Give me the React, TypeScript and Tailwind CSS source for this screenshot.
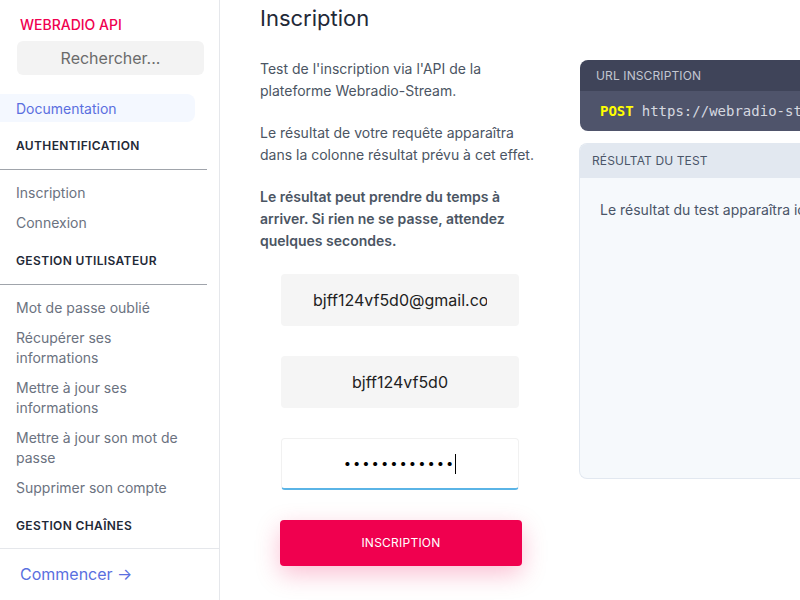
import React from "react";

const font = { fontFamily: "Inter, 'Noto Sans', sans-serif" };

function Section({ title, first }: { title: string; first?: boolean }) {
  return (
    <div className={first ? "mt-[14px]" : "mt-[18px]"}>
      <div className="pl-4 text-[12px] font-semibold tracking-[0.03em] text-[#1f2937] leading-[20px] uppercase">{title}</div>
      <div className="mt-[13px] mr-3 h-px bg-[#a0a4ab]" />
    </div>
  );
}

function Item({ children, first }: { children: React.ReactNode; first?: boolean }) {
  return (
    <div className={`${first ? "mt-[13px]" : "mt-[10px]"} pl-4 pr-6 text-[14px] leading-[20px] text-[#6b7280]`}>{children}</div>
  );
}

export default function App() {
  return (
    <div className="flex h-[600px] w-[800px] overflow-hidden bg-white" style={font}>
      <aside className="flex w-[220px] shrink-0 flex-col border-r border-[#e5e7eb]">
        <div className="flex-1 overflow-hidden">
          <div className="pl-5 pt-[15px] text-[14px] leading-[20px] font-medium text-[#f0004f]">WEBRADIO API</div>
          <div className="ml-[17px] mr-[15px] mt-[6px] flex h-[34px] items-center justify-center rounded-md bg-[#f3f3f3] text-[16px] text-[#6b6b6b]">
            Rechercher...
          </div>
          <div className="mt-[19px] mr-[24px] flex h-[28px] items-center rounded-r-lg bg-[#f4f8ff] pl-4 text-[14px] text-[#5a6fe0]">
            Documentation
          </div>
          <Section title="Authentification" first />
          <Item first>Inscription</Item>
          <Item>Connexion</Item>
          <Section title="Gestion utilisateur" />
          <Item first>Mot de passe oublié</Item>
          <Item>Récupérer ses informations</Item>
          <Item>Mettre à jour ses informations</Item>
          <Item>Mettre à jour son mot de passe</Item>
          <Item>Supprimer son compte</Item>
          <div className="mt-[18px] pl-4 text-[12px] font-semibold tracking-[0.03em] text-[#1f2937] leading-[20px] uppercase">Gestion chaînes</div>
        </div>
        <div className="h-[52px] border-t border-[#e5e7eb] pl-5 pt-[13px] text-[16px] leading-[24px] text-[#5a6fe0]">
          Commencer →
        </div>
      </aside>
      <main className="flex flex-1 gap-[38px] pl-10">
        <div className="w-[282px] shrink-0">
          <h1 className="pt-[4px] text-[22px] leading-[28px] text-[#1f2937]">Inscription</h1>
          <p className="mt-[26px] text-[14px] leading-[22px] text-[#4b5563]">
            Test de l'inscription via l'API de la plateforme Webradio-Stream.
          </p>
          <p className="mt-[20px] text-[14px] leading-[22px] text-[#4b5563]">
            Le résultat de votre requête apparaîtra dans la colonne résultat prévu à cet effet.
          </p>
          <p className="mt-[20px] text-[14px] leading-[22px] font-semibold text-[#4b5563]">
            Le résultat peut prendre du temps à arriver. Si rien ne se passe, attendez quelques secondes.
          </p>
          <div className="ml-[21px] mt-[22px] w-[238px]">
            <div className="flex h-[52px] items-center justify-center overflow-hidden rounded bg-[#f5f5f5] px-8 text-[16px] text-[#222]">
              <span className="whitespace-nowrap overflow-hidden block w-full text-center">bjff124vf5d0@gmail.com</span>
            </div>
            <div className="mt-[30px] flex h-[52px] items-center justify-center rounded bg-[#f5f5f5] text-[16px] text-[#222]">
              bjff124vf5d0
            </div>
            <div className="mt-[30px] flex h-[52px] items-center justify-center rounded border border-[#f1f1f1] border-b-2 border-b-[#5ab4e6] bg-white text-[13px] text-black">
              <span className="tracking-[2px]">••••••••••••</span>
              <span className="inline-block h-[20px] w-px bg-black" />
            </div>
          </div>
          <button className="ml-[20px] mt-[30px] flex h-[46px] w-[242px] items-center justify-center rounded bg-[#f0004f] text-[12px] uppercase tracking-[0.02em] text-white shadow-[0_8px_24px_rgba(240,0,79,0.25)]">
            Inscription
          </button>
        </div>
        <div className="flex-1 pt-[60px]">
          <div className="overflow-hidden rounded-l-lg">
            <div className="flex h-[31px] items-center bg-[#3f4459] pl-4 text-[12px] uppercase tracking-[0.01em] text-[#c3c7d1]">URL Inscription</div>
            <div className="flex h-[40px] items-center whitespace-nowrap bg-[#4f546b] pl-5 text-[14px]" style={{ fontFamily: "'DejaVu Sans Mono', monospace" }}>
              <span className="font-bold text-[#ffff00]">POST</span>
              <span className="ml-2 text-[#d6d9e0]">https://webradio-stream.fr/api/inscription</span>
            </div>
          </div>
          <div className="mt-[12px] -ml-px h-[336px] overflow-hidden rounded-l-lg border border-r-0 border-[#e2e8f0] bg-[#f6f9fc]">
            <div className="flex h-[34px] items-center bg-[#e2e8f0] pl-3 text-[12px] uppercase tracking-[0.01em] text-[#4a5568]">Résultat du test</div>
            <div className="whitespace-nowrap pl-5 pt-[22px] text-[14px] leading-[20px] text-[#4a5568]">Le résultat du test apparaîtra ici</div>
          </div>
        </div>
      </main>
    </div>
  );
}
